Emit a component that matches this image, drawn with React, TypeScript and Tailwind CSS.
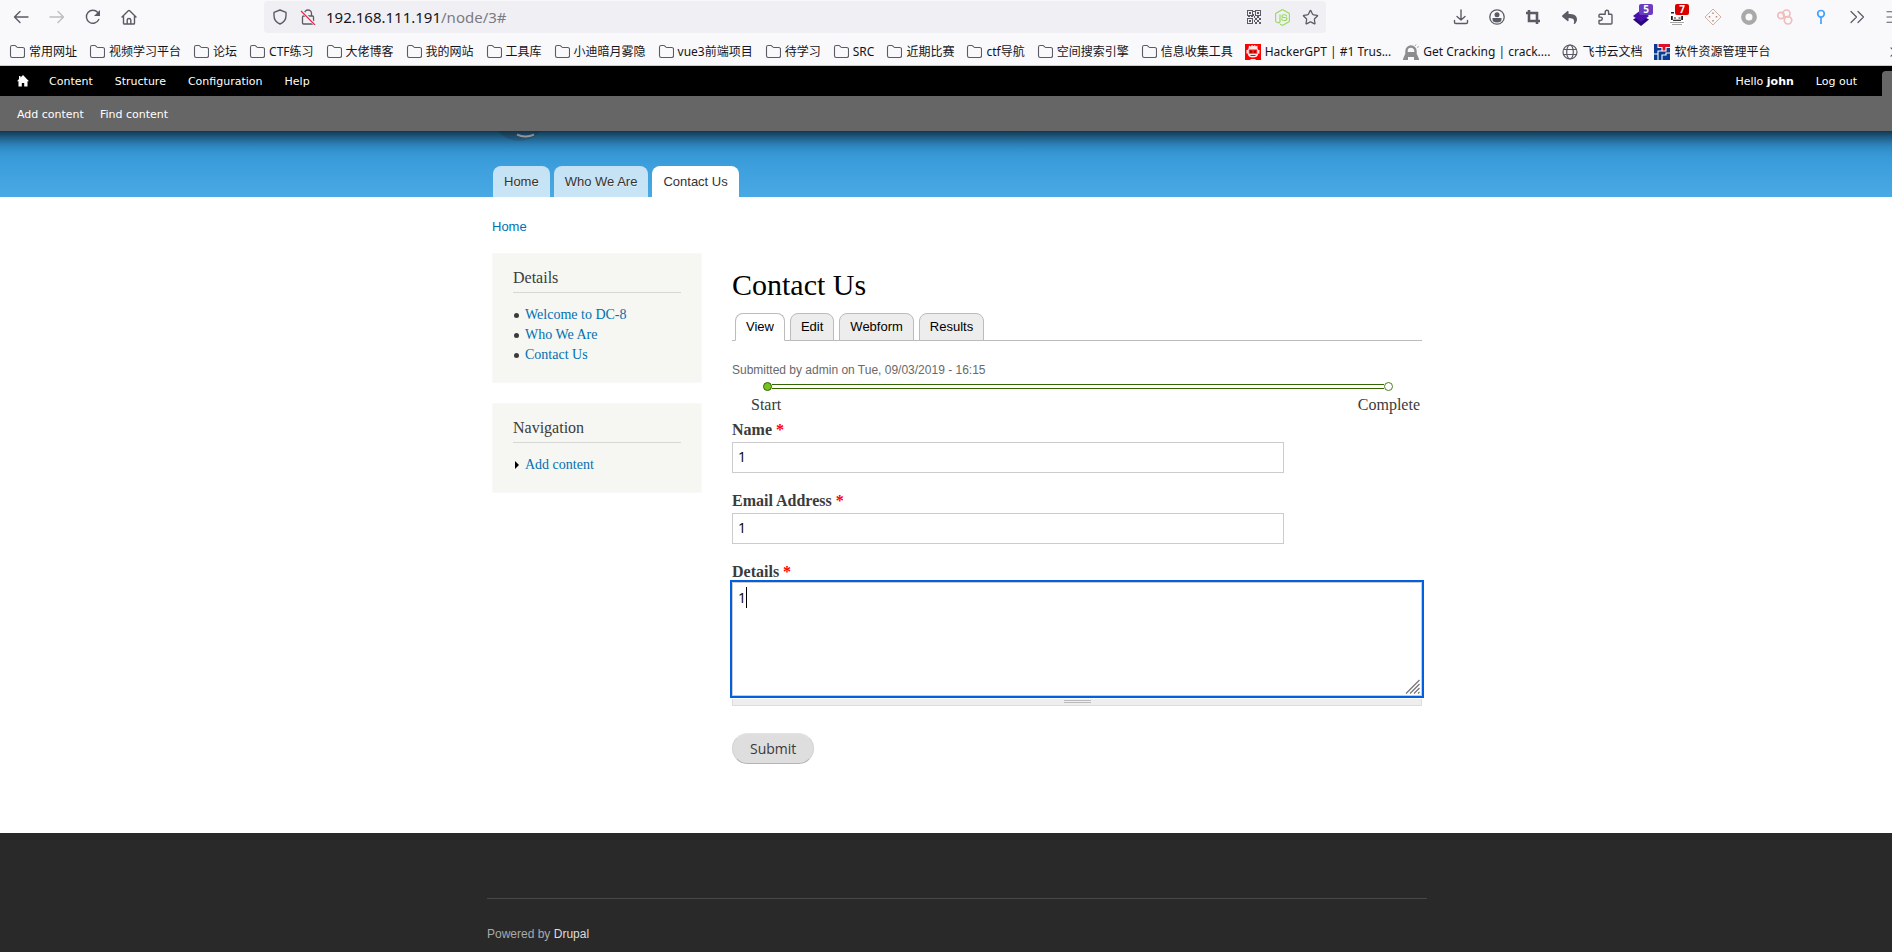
import type { ReactNode } from "react";
import { FaReply, FaNodeJs } from "react-icons/fa";
import { Star, ChevronsRight, Menu } from "lucide-react";

const chromeFont = "font-['Noto_Sans','Noto_Sans_CJK_SC',sans-serif]";
const arial = "font-['Liberation_Sans',sans-serif]";
const georgia = "font-['Liberation_Serif',serif]";

function IconButton({ label, wide = true, children }: { label: string; wide?: boolean; children: ReactNode }) {
  return (
    <button
      type="button"
      aria-label={label}
      className={`flex h-8 shrink-0 items-center justify-center text-[#5b5b66] ${wide ? "w-9" : "w-7"}`}
    >
      {children}
    </button>
  );
}

function Line({ d, className = "", size = 16, width = 1.4 }: { d: string; className?: string; size?: number; width?: number }) {
  return (
    <svg
      viewBox="0 0 16 16"
      width={size}
      height={size}
      fill="none"
      stroke="currentColor"
      strokeWidth={width}
      strokeLinecap="round"
      strokeLinejoin="round"
      className={`shrink-0 ${className}`}
      aria-hidden="true"
    >
      <path d={d} />
    </svg>
  );
}

function QrIcon() {
  return (
    <svg viewBox="0 0 14 14" width="14" height="14" fill="currentColor" shapeRendering="crispEdges" aria-hidden="true">
      <path
        fillRule="evenodd"
        d="M0 0h6v6H0zM1 1v4h4V1zM8 0h6v6H8zM9 1v4h4V1zM0 8h6v6H0zM1 9v4h4V9zM2 2h2v2H2zM10 2h2v2h-2zM2 10h2v2H2z"
      />
      <path d="M6 1h2v1H6zM6 4h1v2H6zM7 6h1v2H7zM1 6h2v1H1zM4 6h2v1H4zM10 6h2v2h-2zM8 8h2v2H8zM12 8h2v2h-2zM10 10h2v2h-2zM7 10h1v2H7zM8 12h2v2H8zM12 12h2v2h-2z" />
    </svg>
  );
}

function LayersIcon() {
  return (
    <svg viewBox="0 0 20 20" width="20" height="20" aria-hidden="true">
      <path d="M10 8l8 4.500-8 6.500-8-6.500z" fill="#2a0a78" />
      <path d="M10 3l8 6-8 6-8-6z" fill="#4b0fb0" />
    </svg>
  );
}

function AgentIcon() {
  return (
    <svg viewBox="0 0 18 18" width="18" height="18" aria-hidden="true">
      <path d="M1 1h16v16H1z" fill="#fff" />
      <path d="M3 4h3v1.500H3zM3 8h1.800v4H3zM13.200 8H15v4h-1.800z" fill="#222" />
      <path d="M6 9.500h2v1H6zM10.500 9.500h2v1h-2z" fill="#222" />
      <path d="M5 12.300h8" stroke="#222" strokeWidth="1.200" />
      <path d="M2 14.500h14M4 16.500h10" stroke="#a5a5a5" strokeWidth="1" />
    </svg>
  );
}

function DiamondIcon() {
  return (
    <svg viewBox="0 0 18 18" width="18" height="18" fill="none" stroke="#d3b0a0" aria-hidden="true">
      <path d="M9 1l8 8-8 8-8-8z" />
      <path d="M9 4.500v1.500M9 12v1.500M5.500 8v1.500M12.500 8v1.500" strokeWidth="1.400" stroke="#b98468" />
    </svg>
  );
}

function FolderIcon() {
  return (
    <svg viewBox="0 0 16 16" width="16" height="16" fill="none" stroke="#5b5b66" strokeWidth="1.100" className="shrink-0" aria-hidden="true">
      <path d="M1.500 3.200q0-1.700 1.700-1.700h2.600q.7 0 1.200.6l.8.900q.4.500 1.100.5h4.900q1.700 0 1.700 1.700v6.600q0 1.700-1.700 1.700H3.200q-1.700 0-1.700-1.700z" />
    </svg>
  );
}

function RobotIcon() {
  return (
    <svg viewBox="0 0 16 16" width="16" height="16" className="shrink-0" aria-hidden="true">
      <path d="M0 0h16v16H0z" fill="#f00" />
      <path d="M3.500 4.500L4 1.500l1.500 1L7 1l1.500 1L10 1l.8 1.500 1.700-1v3l1 1.500h1v3.500h-1.200C12.800 12.500 11 13.500 8 13.500s-4.800-1-5.300-4H1.500V6h1z" fill="#fff" fillOpacity=".9" />
      <path d="M3.800 5.500h8.400v4.200H3.800z" fill="#f22" />
      <path d="M5 6.500h2.200v2.200H5zM8.800 6.500H11v2.200H8.800z" fill="#a00000" />
      <path d="M5.500 11h5v1h-5z" fill="#f00" />
      <path d="M5.500 15h5v1h-5z" fill="#fff" />
    </svg>
  );
}

function PadlockIcon() {
  return (
    <svg viewBox="0 0 16 16" width="16" height="16" className="shrink-0" aria-hidden="true">
      <path d="M3.500 9V7a4.500 4.500 0 0 1 9 0v2" fill="none" stroke="#8d8d8d" strokeWidth="2.400" />
      <path d="M0 15l3-7h10l3 7v1h-5v-3H5v3H0z" fill="#8d8d8d" />
      <path d="M12 2l1-1.500M14 3.500l2-1" stroke="#aaa" />
    </svg>
  );
}

function GlobeIcon() {
  return (
    <svg viewBox="0 0 16 16" width="16" height="16" fill="none" stroke="#5b5b66" strokeWidth="1.200" className="shrink-0" aria-hidden="true">
      <circle cx="8" cy="8" r="7" />
      <ellipse cx="8" cy="8" rx="3.300" ry="7" />
      <path d="M1.500 5.500h13M1.500 10.500h13" />
    </svg>
  );
}

function PlatformIcon() {
  return (
    <svg viewBox="0 0 16 16" width="16" height="16" className="shrink-0" aria-hidden="true">
      <path d="M0 0h16v16H0z" fill="#0a3d91" />
      <path d="M4 0h12v3.500h-4V7H8V3.500H4z" fill="#e0102a" />
      <path d="M4 0v3.500h4V7H4v3H0M16 3.500h-4V7H8M4 10v6M8 16v-5h4V9h4" fill="none" stroke="#fff" strokeWidth="1.100" />
    </svg>
  );
}

const folders = [
  "常用网址",
  "视频学习平台",
  "论坛",
  "CTF练习",
  "大佬博客",
  "我的网站",
  "工具库",
  "小迪暗月雾隐",
  "vue3前端项目",
  "待学习",
  "SRC",
  "近期比赛",
  "ctf导航",
  "空间搜索引擎",
  "信息收集工具",
];

function Bookmark({ icon, children }: { icon: ReactNode; children: ReactNode }) {
  return (
    <a href="#" className="flex shrink-0 items-center gap-1 whitespace-nowrap">
      {icon}
      {children}
    </a>
  );
}

function BrowserChrome() {
  return (
    <div className={`relative z-20 border-b border-[#cccccc] bg-[#f9f9fb] text-[#15141a] ${chromeFont}`}>
      <div className="flex h-[34px] items-start">
        <div className="flex w-[264px] shrink-0 pt-px pl-[3px]">
          <IconButton label="Back">
            <Line d="M15 8H1.500M7 2.500L1.500 8l5.500 5.500" />
          </IconButton>
          <IconButton label="Forward">
            <Line className="text-[#bcbcc2]" d="M1 8h13.500M9 2.500L14.500 8 9 13.500" />
          </IconButton>
          <IconButton label="Reload">
            <svg viewBox="0 0 16 16" width="16" height="16" aria-hidden="true">
              <path d="M13.800 10.500A6.500 6.500 0 1 1 12.800 3.500" fill="none" stroke="currentColor" strokeWidth="1.400" strokeLinecap="round" />
              <path d="M15 1v6H9z" fill="currentColor" />
            </svg>
          </IconButton>
          <IconButton label="Home page">
            <Line d="M2.500 7v7.200q0 .8.800.8h9.400q.8 0 .8-.8V7M1 8l6.300-6.200q.7-.7 1.400 0L15 8M6.200 15v-4q0-1.500 1.800-1.500T9.800 11v4" />
          </IconButton>
        </div>
        <div className="mt-px flex h-8 flex-1 items-center rounded-[4px] bg-[#f0f0f4] pr-0.5 pl-0.5">
          <IconButton label="Tracking protection" wide={false}>
            <Line d="M8 1l6 2.300v3.200c0 4-2.200 7-6 8.500-3.800-1.500-6-4.500-6-8.500V3.300z" />
          </IconButton>
          <IconButton label="Connection not secure" wide={false}>
            <svg viewBox="0 0 16 16" width="16" height="16" fill="none" aria-hidden="true">
              <path d="M4.500 7V4.500a3.500 3.500 0 0 1 7 0V7M3.500 7h9q1 0 1 1v6q0 1-1 1h-9q-1 0-1-1V8q0-1 1-1z" stroke="#5b5b66" strokeWidth="1.300" />
              <path d="M1.500 2l13 13" stroke="#f0f0f4" strokeWidth="3" />
              <path d="M1 2l14 14" stroke="#e22850" strokeWidth="1.200" />
            </svg>
          </IconButton>
          <div role="textbox" aria-label="Address" tabIndex={0} className="flex-1 pl-1 text-[15px] leading-[22px]">
            192.168.111.191<span className="text-[#7b7b83]">/node/3#</span>
          </div>
          <IconButton label="QR code" wide={false}>
            <QrIcon />
          </IconButton>
          <IconButton label="Node" wide={false}>
            <FaNodeJs size={17} className="text-[#96d95a]" />
          </IconButton>
          <IconButton label="Bookmark this page" wide={false}>
            <Star size={17} strokeWidth={1.8} />
          </IconButton>
        </div>
        <div className="flex w-[588px] shrink-0 pt-px pl-[117px]">
          <IconButton label="Downloads">
            <Line d="M8 1v10M4 7.500L8 11l4-3.500M1.500 11.500v1.700q0 1.300 1.300 1.300h10.400q1.300 0 1.300-1.300v-1.700" />
          </IconButton>
          <IconButton label="Account">
            <svg viewBox="0 0 16 16" width="16" height="16" fill="currentColor" aria-hidden="true">
              <circle cx="8" cy="8" r="7.200" fill="none" stroke="currentColor" strokeWidth="1.300" />
              <circle cx="8" cy="5.800" r="2.500" />
              <path d="M3.500 9h9v1.200A4.500 3.300 0 0 1 3.500 10.200z" />
            </svg>
          </IconButton>
          <IconButton label="Screenshot">
            <svg viewBox="0 0 16 16" width="16" height="16" fill="none" stroke="currentColor" strokeWidth="2.600" aria-hidden="true">
              <path d="M4 1v11h11M1 4h11v11" />
            </svg>
          </IconButton>
          <IconButton label="Undo close tab">
            <FaReply size={15} />
          </IconButton>
          <IconButton label="Extensions">
            <Line d="M5 5.200h3.200V3a1.700 1.700 0 0 1 3.400 0v2.200H14q1 0 1 1V14q0 1-1 1H3q-1 0-1-1v-2.500h1.600a1.700 1.700 0 0 0 0-3.400H2V6.200q0-1 1-1h2" />
          </IconButton>
          <IconButton label="Stack, 5">
            <span className="relative">
              <LayersIcon />
              <span className="absolute -top-[3px] left-2 flex h-[11px] w-3.5 items-center justify-center rounded-[2px] bg-[#6a3cc0] font-['Open_Sans',sans-serif] text-[10px] font-bold text-white">
                5
              </span>
            </span>
          </IconButton>
          <IconButton label="Agent, 7">
            <span className="relative">
              <AgentIcon />
              <span className="absolute -top-1 left-[7px] flex h-[11px] w-3.5 items-center justify-center rounded-[2px] bg-[#d90000] font-['Open_Sans',sans-serif] text-[10px] font-bold text-white">
                7
              </span>
            </span>
          </IconButton>
          <IconButton label="Diamond">
            <DiamondIcon />
          </IconButton>
          <IconButton label="Ring">
            <svg viewBox="0 0 16 16" width="16" height="16" aria-hidden="true">
              <circle cx="8" cy="8" r="5.700" fill="none" stroke="#a9a9a9" strokeWidth="4.400" />
            </svg>
          </IconButton>
          <IconButton label="Circles">
            <svg viewBox="0 0 16 16" width="16" height="16" fill="none" stroke="#f0bcbc" strokeWidth="1.700" aria-hidden="true">
              <circle cx="4" cy="6.500" r="3.200" />
              <circle cx="9.500" cy="4.500" r="3.500" />
              <circle cx="11" cy="11.300" r="3.700" />
            </svg>
          </IconButton>
          <IconButton label="Pin">
            <svg viewBox="0 0 16 16" width="16" height="16" fill="none" stroke="#45a1ff" strokeWidth="1.700" aria-hidden="true">
              <circle cx="8" cy="4.800" r="3.300" />
              <path d="M8 8.200V15" />
            </svg>
          </IconButton>
          <IconButton label="More tools">
            <Line d="M2 2.500L7.500 8 2 13.500M9 2.500L14.500 8 9 13.500" width={1.2} />
          </IconButton>
          <IconButton label="Menu">
            <Menu size={18} strokeWidth={1.6} />
          </IconButton>
        </div>
      </div>
      <nav aria-label="Bookmarks" className="flex h-[31px] items-center gap-3 pt-1.5 pr-2 pb-px pl-[9px] text-[12px]">
        {folders.map((name) => (
          <Bookmark key={name} icon={<FolderIcon />}>
            {name}
          </Bookmark>
        ))}
        <Bookmark icon={<RobotIcon />}>HackerGPT | #1 Trus...</Bookmark>
        <Bookmark icon={<PadlockIcon />}>Get Cracking | crack....</Bookmark>
        <Bookmark icon={<GlobeIcon />}>飞书云文档</Bookmark>
        <Bookmark icon={<PlatformIcon />}>软件资源管理平台</Bookmark>
        <button type="button" aria-label="More bookmarks" className="ml-auto shrink-0 text-[#5b5b66]">
          <ChevronsRight size={20} strokeWidth={1.4} />
        </button>
      </nav>
    </div>
  );
}

function AdminToolbar() {
  return (
    <div className="relative z-10 -mx-6 px-6 font-['DejaVu_Sans',sans-serif] text-[11px] text-white shadow-[0_3px_20px_#000]">
      <div className="flex h-[30px] items-center bg-black pl-[17px]">
        <a href="#" aria-label="Home" className="mr-5">
          <svg viewBox="0 0 12 12" width="12" height="12" fill="currentColor" aria-hidden="true">
            <path d="M6 0l6 6.200h-1.500V11.500H7.200V8H4.800v3.500H1.500V6.200H0L2 4V1h1.500v1.500z" />
          </svg>
        </a>
        <nav aria-label="Administration" className="flex gap-[22px] pt-[3px]">
          <a href="#">Content</a>
          <a href="#">Structure</a>
          <a href="#">Configuration</a>
          <a href="#">Help</a>
        </nav>
        <div className="ml-auto flex items-center gap-[22px] pt-[3px]">
          <span>
            Hello <strong>john</strong>
          </span>
          <a href="#">Log out</a>
        </div>
        <button type="button" aria-label="Toggle shortcuts" className="mt-[5px] ml-[25px] flex h-[25px] w-8 items-center justify-center rounded-t-[4px] bg-[#666]">
          <svg viewBox="0 0 14 8" width="14" height="8" fill="#111" aria-hidden="true">
            <path d="M1 3h12v1L7 8 1 4z" />
          </svg>
        </button>
      </div>
      <nav aria-label="Shortcuts" className="flex h-[35px] items-center gap-4 bg-[#666] pt-[3px] pl-[17px]">
        <a href="#">Add content</a>
        <a href="#">Find content</a>
      </nav>
    </div>
  );
}

function Header() {
  const tab = "flex h-[31px] items-center rounded-t-[8px] px-[11px] text-[#333]";
  return (
    <header className="bg-linear-to-b from-[#2f93d3] to-[#48a9e4]">
      <div className="mx-auto w-[940px]">
        <svg viewBox="0 0 60 10" width="60" height="10" className="ml-1 block" aria-hidden="true">
          <circle cx="28" cy="-18" r="28" fill="#3480b4" />
          <path d="M26 3.500q8.500 4 17 0" fill="none" stroke="#fff" strokeWidth="2" />
        </svg>
        <nav aria-label="Main menu" className={`flex gap-1 pt-[25px] pl-1.5 text-[13px] ${arial}`}>
          <a href="#" className={`${tab} bg-white/70 text-shadow-[0_1px_#eee]`}>
            Home
          </a>
          <a href="#" className={`${tab} bg-white/70 text-shadow-[0_1px_#eee]`}>
            Who We Are
          </a>
          <a href="#" className={`${tab} bg-white`}>
            Contact Us
          </a>
        </nav>
      </div>
    </header>
  );
}

function Block({ title, children }: { title: string; children: ReactNode }) {
  return (
    <section className="border border-[#f9f9f9] bg-[#f6f6f2] px-5 pt-[15px] pb-[17px]">
      <h2 className="border-b border-[#d6d6d6] pb-[5px] text-[16px] leading-[18px] text-[#3b3b3b]">{title}</h2>
      {children}
    </section>
  );
}

function Sidebar() {
  return (
    <aside className="flex w-[210px] shrink-0 flex-col gap-5">
      <Block title="Details">
        <ul className="mt-3 text-[14px] leading-[20px] text-[#0071b3]">
          {["Welcome to DC-8", "Who We Are", "Contact Us"].map((item) => (
            <li key={item} className="flex items-center gap-1.5 pl-px">
              <span className="size-[5px] rounded-full bg-[#3b3b3b]" />
              <a href="#">{item}</a>
            </li>
          ))}
        </ul>
      </Block>
      <Block title="Navigation">
        <ul className="mt-3 text-[14px] leading-[20px] text-[#0071b3]">
          <li className="flex items-center gap-1.5 pl-px">
            <svg viewBox="0 0 5 8" width="5" height="8" aria-hidden="true">
              <path d="M1 0l4 4-4 4z" fill="#000" />
            </svg>
            <a href="#">Add content</a>
          </li>
        </ul>
      </Block>
    </aside>
  );
}

function LocalTabs() {
  const tab = "flex h-7 items-center rounded-t-[8px] border border-[#bbb] px-2.5 text-black";
  return (
    <nav aria-label="Page tabs" className={`mt-3 flex items-end gap-[5px] border-b border-[#bbb] pl-[3px] text-[13px] ${arial}`}>
      <a href="#" className={`${tab} -mb-px border-b-white bg-white`}>
        View
      </a>
      {["Edit", "Webform", "Results"].map((name) => (
        <a key={name} href="#" className={`${tab} -mb-px bg-[#ededed]`}>
          {name}
        </a>
      ))}
    </nav>
  );
}

function Progress() {
  return (
    <div className="mt-1">
      <div className="flex items-center pr-[29px] pl-[31px]">
        <span className="size-[9px] rounded-full border border-[#360] bg-[#74c421]" />
        <span className="h-[5px] flex-1 border-y border-[#360]" />
        <span className="size-[9px] rounded-full border border-[#48801a] bg-white" />
      </div>
      <div className="flex justify-between pt-1 pr-0.5 pl-[19px] text-[16px] leading-[20px]">
        <span>Start</span>
        <span>Complete</span>
      </div>
    </div>
  );
}

function FieldLabel({ id, children }: { id: string; children: string }) {
  return (
    <label htmlFor={id} className="block text-[16px] leading-[20px] font-bold">
      {children} <span className="text-[#f00]">*</span>
    </label>
  );
}

function TextField({ id, label }: { id: string; label: string }) {
  return (
    <div className="mb-[18px]">
      <FieldLabel id={id}>{label}</FieldLabel>
      <input
        id={id}
        type="text"
        defaultValue="1"
        className="mt-0.5 block h-[31px] w-[80%] border border-[#ccc] bg-white px-[5px] pb-0.5 font-['Open_Sans',sans-serif] text-[14px] text-black outline-none"
      />
    </div>
  );
}

function ContactForm() {
  return (
    <form className="mt-[5px]" onSubmit={(event) => event.preventDefault()}>
      <TextField id="name" label="Name" />
      <TextField id="email" label="Email Address" />
      <FieldLabel id="details">Details</FieldLabel>
      <div className="relative">
        <textarea
          id="details"
          defaultValue="1"
          className="block h-[114px] w-full resize-none border border-[#ccc] bg-white px-[5px] py-1 font-['Open_Sans',sans-serif] text-[14px] leading-[21px] text-black outline-2 outline-[#0060df]"
        />
        <span className="absolute top-[5px] left-3.5 h-[21px] w-px bg-black" />
        <svg viewBox="0 0 15 15" width="15" height="15" className="absolute right-0.5 bottom-0.5" stroke="#777" strokeWidth="1.300" aria-hidden="true">
          <path d="M1 14.500L14.500 1M5 14.500l9.500-9.500M9 14.500l5.500-5.500M13 14.500l1.500-1.500" />
        </svg>
      </div>
      <div className="mt-[3px] flex h-[7px] justify-center border border-t-0 border-[#ddd] bg-[#eee] pt-px">
        <span className="h-[3px] w-[27px] border-y border-[#bbb]" />
      </div>
      <button
        type="submit"
        className="mt-[27px] block h-[31px] rounded-full border border-[#e4e4e4] border-x-[#d2d2d2] border-b-[#b4b4b4] bg-[#dedede] px-[17px] pb-px font-['Open_Sans',sans-serif] text-[14px] text-[#3a3a3a]"
      >
        Submit
      </button>
    </form>
  );
}

export default function App() {
  return (
    <div className="min-h-screen overflow-hidden bg-[#292929]">
      <div className="w-[calc(100%+22px)]">
        <BrowserChrome />
        <AdminToolbar />
        <Header />
        <div className="bg-white pb-[69px]">
          <div className={`mx-auto w-[930px] text-[#3b3b3b] ${georgia}`}>
            <nav aria-label="Breadcrumb" className={`pt-[21px] text-[13px] leading-[18px] text-[#0071b3] ${arial}`}>
              <a href="#">Home</a>
            </nav>
            <div className="flex gap-[30px] pt-[17px]">
              <Sidebar />
              <main className="min-w-0 flex-1 pt-4">
                <h1 className="text-[30px] leading-[32px] text-black">Contact Us</h1>
                <LocalTabs />
                <p className={`mt-[21px] text-[12px] leading-[16px] text-[#68696b] ${arial}`}>
                  Submitted by admin on Tue, 09/03/2019 - 16:15
                </p>
                <Progress />
                <ContactForm />
              </main>
            </div>
          </div>
        </div>
        <footer className={`mx-auto w-[940px] pt-[65px] text-[12px] text-[#aaa] ${arial}`}>
          <p className="border-t border-[#484848] pt-[26px] leading-[18px]">
            Powered by{" "}
            <a href="#" className="text-[#ddd]">
              Drupal
            </a>
          </p>
        </footer>
      </div>
    </div>
  );
}
